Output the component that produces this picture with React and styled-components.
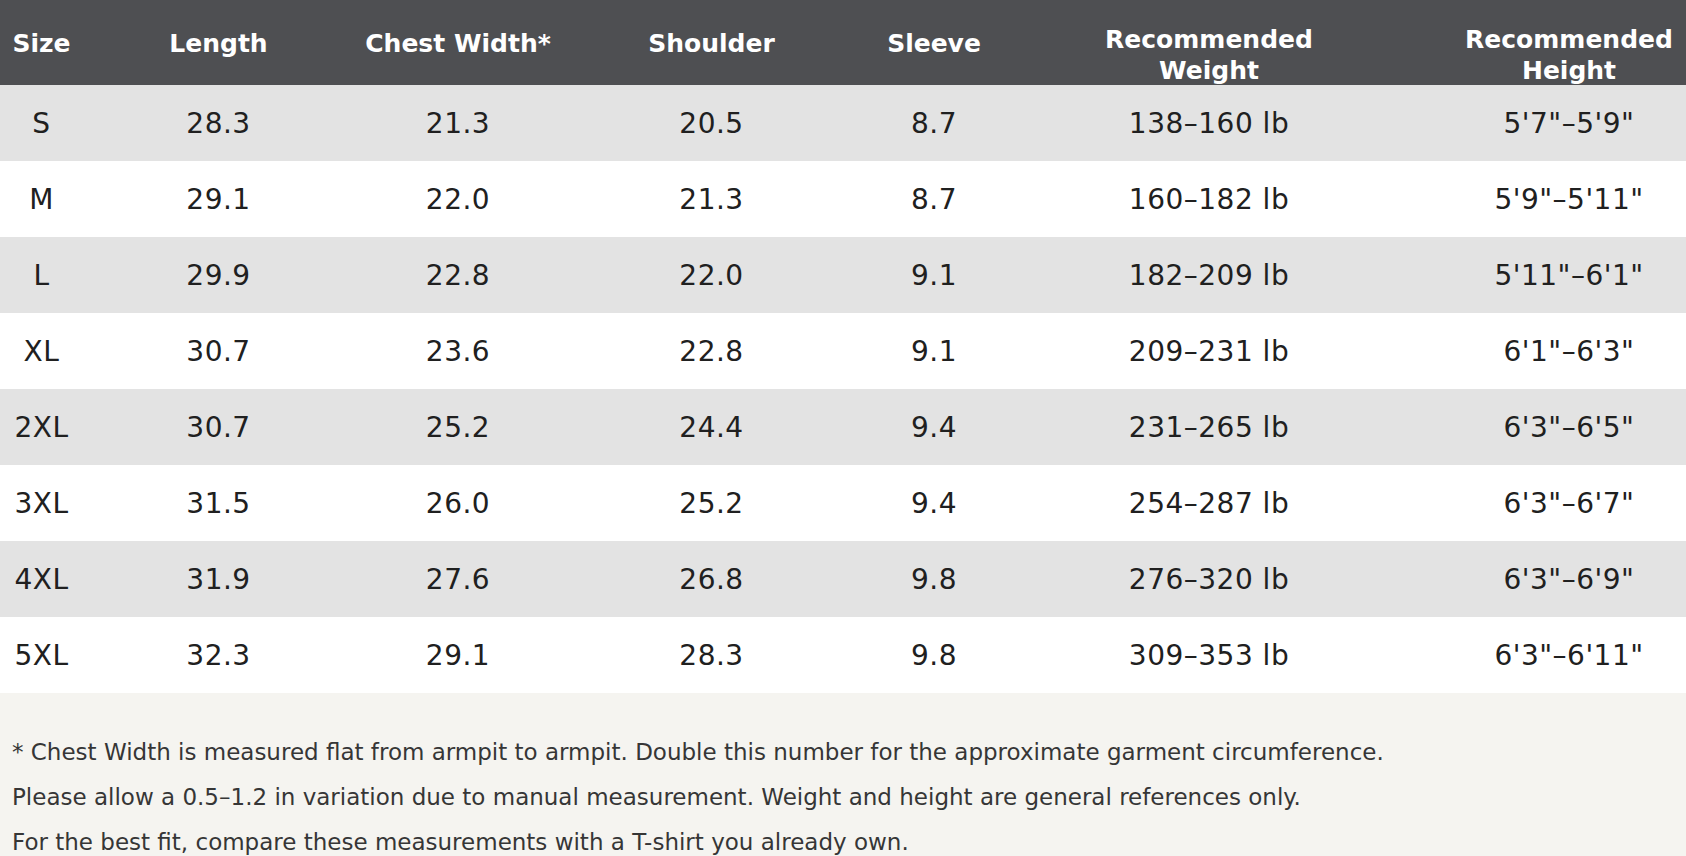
import React from 'react'
import styled, { createGlobalStyle } from 'styled-components'

const GlobalStyle = createGlobalStyle`
  html, body {
    margin: 0;
    padding: 0;
    background: #f5f4f0;
    overflow: hidden;
  }
  body {
    font-family: "DejaVu Sans", Verdana, sans-serif;
  }
`

// the table is a little wider than the window, the wrapper clips it
const COLUMNS = '83px 271px 208px 299px 146px 404px 316px'

const Page = styled.div`
  width: 100%;
  overflow: hidden;
`

const Table = styled.div`
  width: 1727px;
`

const HeadRow = styled.div`
  display: grid;
  grid-template-columns: ${COLUMNS};
  height: 85px;
  background: #4e4f52;
`

const HeadCell = styled.div`
  display: flex;
  justify-content: center;
  align-items: ${p => (p.$tall ? 'flex-start' : 'center')};
  padding: ${p => (p.$tall ? '23.5px 6px 0' : '1px 6px 0')};
  color: #fff;
  font-size: 25px;
  font-weight: bold;
  line-height: 31px;
  text-align: center;
  white-space: nowrap;
`

const Row = styled.div`
  display: grid;
  grid-template-columns: ${COLUMNS};
  height: 76px;
  background: ${p => (p.$striped ? '#e3e3e3' : '#ffffff')};
`

const Cell = styled.div`
  display: flex;
  justify-content: center;
  align-items: center;
  padding-top: 1px;
  color: #202020;
  font-size: 28px;
  letter-spacing: 0.5px;
  white-space: nowrap;
`

const Notes = styled.div`
  padding: 37px 12px 0;
  background: #f5f4f0;
`

const Note = styled.p`
  margin: 0;
  color: #363636;
  font-size: 23px;
  line-height: 45px;
`

const headers = [
  ['Size'],
  ['Length'],
  ['Chest Width*'],
  ['Shoulder'],
  ['Sleeve'],
  ['Recommended', 'Weight'],
  ['Recommended', 'Height'],
]

const sizes = [
  ['S', '28.3', '21.3', '20.5', '8.7', '138–160 lb', '5\'7"–5\'9"'],
  ['M', '29.1', '22.0', '21.3', '8.7', '160–182 lb', '5\'9"–5\'11"'],
  ['L', '29.9', '22.8', '22.0', '9.1', '182–209 lb', '5\'11"–6\'1"'],
  ['XL', '30.7', '23.6', '22.8', '9.1', '209–231 lb', '6\'1"–6\'3"'],
  ['2XL', '30.7', '25.2', '24.4', '9.4', '231–265 lb', '6\'3"–6\'5"'],
  ['3XL', '31.5', '26.0', '25.2', '9.4', '254–287 lb', '6\'3"–6\'7"'],
  ['4XL', '31.9', '27.6', '26.8', '9.8', '276–320 lb', '6\'3"–6\'9"'],
  ['5XL', '32.3', '29.1', '28.3', '9.8', '309–353 lb', '6\'3"–6\'11"'],
]

const notes = [
  '* Chest Width is measured flat from armpit to armpit. Double this number for the approximate garment circumference.',
  'Please allow a 0.5–1.2 in variation due to manual measurement. Weight and height are general references only.',
  'For the best fit, compare these measurements with a T-shirt you already own.',
]

const App = () => {
  return (
    <Page>
      <GlobalStyle />
      <Table>
        <HeadRow>
          {headers.map((lines) => (
            <HeadCell key={lines.join(' ')} $tall={lines.length > 1}>
              <span>
                {lines.map((line, i) => (
                  <React.Fragment key={line}>
                    {i > 0 && <br />}
                    {line}
                  </React.Fragment>
                ))}
              </span>
            </HeadCell>
          ))}
        </HeadRow>
        {sizes.map((row, i) => (
          <Row key={row[0]} $striped={i % 2 === 0}>
            {row.map((value, j) => (
              <Cell key={j}>{value}</Cell>
            ))}
          </Row>
        ))}
      </Table>
      <Notes>
        {notes.map((text) => (
          <Note key={text}>{text}</Note>
        ))}
      </Notes>
    </Page>
  )
}

export default App
